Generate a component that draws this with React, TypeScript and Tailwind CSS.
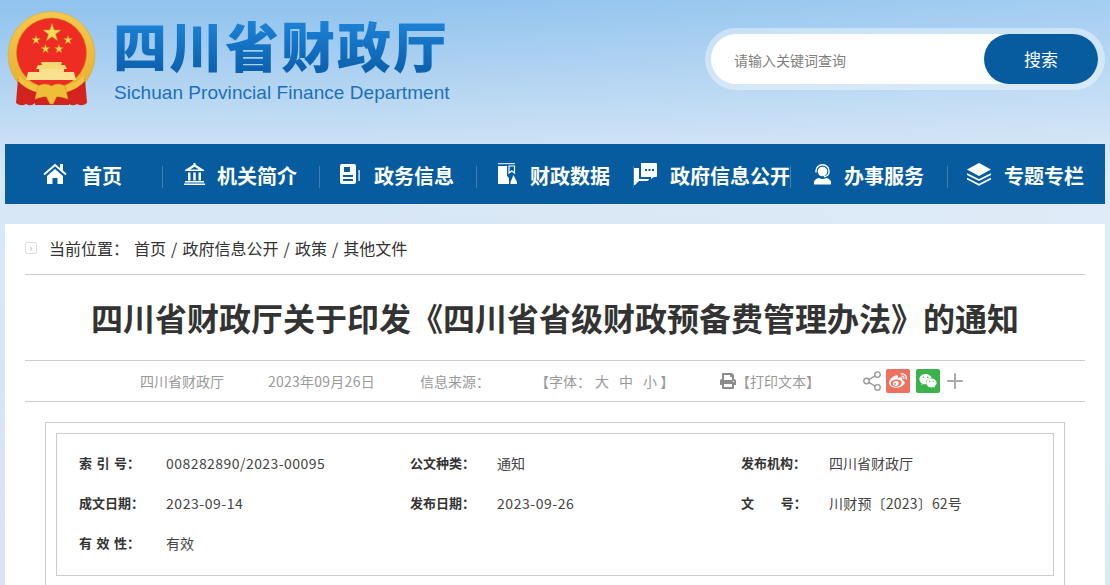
import React from 'react'
import { FaPrint, FaWeibo, FaWeixin } from 'react-icons/fa'
import { Share2, Plus } from 'lucide-react'

const Star = ({ x, y, r }: { x: number; y: number; r: number }) => {
    const pts: string[] = []
    for (let i = 0; i < 10; i++) {
        const rad = i % 2 === 0 ? r : r * 0.4
        const a = (Math.PI / 5) * i - Math.PI / 2
        pts.push(`${x + rad * Math.cos(a)},${y + rad * Math.sin(a)}`)
    }
    return <polygon points={pts.join(' ')} fill="#f8d95a" stroke="#c98d1b" strokeWidth="0.6" />
}

const Emblem = () => (
    <svg width="90" height="96" viewBox="0 0 90 96" className="shrink-0">
        <defs>
            <linearGradient id="gold" x1="0" y1="0" x2="0" y2="1">
                <stop offset="0" stopColor="#f3c94f" />
                <stop offset="1" stopColor="#e8ad2a" />
            </linearGradient>
        </defs>
        <circle cx="44.5" cy="44" r="43.5" fill="url(#gold)" stroke="#d8a02a" strokeWidth="0.5" />
        <circle cx="44.5" cy="42" r="35" fill="#ee2c24" stroke="#c9871d" strokeWidth="0.7" />
        <Star x={45} y={22} r={9.5} />
        <Star x={29} y={29} r={4.5} />
        <Star x={61} y={29} r={4.5} />
        <Star x={38.5} y={38} r={4.5} />
        <Star x={52} y={38} r={4.5} />
        <path d="M34 51 H55 L54 54 H58 L60 58 H29 L31 54 H35 Z" fill="#f6d873" />
        <path d="M32 58 H57 V61 H67 L69 69 H19 L21 61 H32 Z" fill="#f9e08c" />
        <path d="M11 67 L9 92 Q14 96 19 93 Q24 96 28 92 L33 80 Q20 78 11 67 Z" fill="#d3231f" />
        <path d="M78 67 L80 92 Q75 96 70 93 Q65 96 61 92 L56 80 Q69 78 78 67 Z" fill="#d3231f" />
        <path d="M28 86 H62 V94 H28 Z" fill="#d3231f" />
        <path d="M12 64 Q22 76 44.5 76 Q67 76 77 64 L78 70 Q66 83 44.5 83 Q23 83 11 70 Z" fill="#f1c33f" />
        <path d="M31 75 Q38 71 44.5 75 Q51 71 58 75 L61 88 L50 85 L46 93 H43 L39 85 L28 88 Z" fill="#efbe38" stroke="#cf9423" strokeWidth="0.5" />
    </svg>
)

const IconHome = () => (
    <svg width="24" height="22" viewBox="0 0 24 22" fill="currentColor">
        <path d="M17 1 H20 V8 L17 5.5 Z" />
        <path d="M1 11.5 L12 2 L23 11.5" fill="none" stroke="currentColor" strokeWidth="2" />
        <path d="M12 6 L20 13 V21 H14.5 V15 H9.5 V21 H4 V13 Z" />
    </svg>
)

const IconBank = () => (
    <svg width="21" height="22" viewBox="0 0 21 22" fill="currentColor">
        <rect x="9.5" y="0" width="2" height="2" />
        <path d="M10.5 1 L20 7 V8 H1 V7 Z M10.5 3.8 L6 6.5 H15 Z" fillRule="evenodd" />
        <rect x="4" y="9.5" width="2.5" height="8" />
        <rect x="9.25" y="9.5" width="2.5" height="8" />
        <rect x="14.5" y="9.5" width="2.5" height="8" />
        <rect x="1" y="18" width="19" height="1.5" />
        <rect x="0" y="20.5" width="21" height="1.5" />
    </svg>
)

const IconCard = () => (
    <svg width="20" height="20" viewBox="0 0 20 20" fill="currentColor">
        <path d="M0 2 a2 2 0 0 1 2-2 h12 a2 2 0 0 1 2 2 v16 a2 2 0 0 1-2 2 H2 a2 2 0 0 1-2-2 Z M4 3 v5 h6 V3 Z M3 11 v2 h10 v-2 Z M3 15 v2 h10 v-2 Z" fillRule="evenodd" />
        <rect x="18.5" y="6" width="1.2" height="11" />
    </svg>
)

const IconData = () => (
    <svg width="19" height="22" viewBox="0 0 19 22" fill="currentColor">
        <rect x="0" y="0" width="17" height="1.2" opacity="0.8" />
        <path d="M0 3 H9 V13 L11 15 V21 H0 Z" />
        <path d="M11 3 H16.5 V10 L13.8 8 L11 10 Z" fill="none" stroke="currentColor" strokeWidth="1.2" />
        <path d="M15.5 12 L19 19 V21 H12.5 V19 Z" />
    </svg>
)

const IconChat = () => (
    <svg width="23" height="22" viewBox="0 0 23 22" fill="currentColor">
        <path d="M7 0 H22 a1 1 0 0 1 1 1 V13 a1 1 0 0 1-1 1 H20 L17 16 V14 H7 Z M11 6 v2 h2 V6 Z M14.5 6 v2 h2 V6 Z M18 6 v2 h2 V6 Z" fillRule="evenodd" />
        <path d="M0 5 H5 V16 H15 L14 18 H5 L1 22 H0 Z" />
    </svg>
)

const IconService = () => (
    <svg width="19" height="21" viewBox="0 0 19 21" fill="currentColor">
        <circle cx="9.5" cy="7.5" r="4.8" />
        <path d="M3 8.5 V7 A6.5 6.2 0 0 1 16 7 V8.5 Q15.5 12 11 12.8" fill="none" stroke="currentColor" strokeWidth="1.4" />
        <path d="M1 20.5 Q0 15 6 14 Q9.5 16 13 14 Q19 15 18 20.5 Z" />
    </svg>
)

const IconLayers = () => (
    <svg width="24" height="23" viewBox="0 0 24 23" fill="currentColor">
        <path d="M12 0 L24 6.5 L12 13 L0 6.5 Z" />
        <path d="M0 11 L12 17 L24 11" fill="none" stroke="currentColor" strokeWidth="1.6" />
        <path d="M0 15.5 L12 21.8 L24 15.5" fill="none" stroke="currentColor" strokeWidth="1.6" />
    </svg>
)

const NavItem = ({ icon, label, last, className }: { icon: React.ReactNode; label: string; last?: boolean; className: string }) => (
    <div className={`relative flex h-full w-[157px] items-center ${className}`}>
        <span className="flex w-[24px] justify-center text-white">{icon}</span>
        <span className="whitespace-nowrap pt-[4px] text-[20px] font-bold leading-none text-white">{label}</span>
        {!last && <span className="absolute right-[-1px] top-[22px] h-[22px] w-px bg-[#3f80b4]" />}
    </div>
)

const Field = ({ label, value, className }: { label: string; value: string; className?: string }) => (
    <div className="flex h-[40px] items-center">
        <span className="w-[87px] shrink-0 whitespace-pre text-[13px] font-bold text-[#333] [word-spacing:1.5px]">{label}</span>
        <span className={`text-[14px] text-[#444] ${className ?? ''}`}>{value}</span>
    </div>
)

export default function App() {
    return (
        <div className="h-[585px] w-[1110px] overflow-hidden bg-[linear-gradient(90deg,rgba(255,255,255,0)_30%,rgba(255,255,255,0.18)_100%),linear-gradient(180deg,#8fc2ee,#d8e7f6_30%,#d6e4f3)] font-['Noto_Sans_CJK_SC',sans-serif]">
            <header className="flex h-[144px] justify-between pl-[7px] pr-[5px] pt-[11px]">
                <div className="flex">
                    <Emblem />
                    <div className="ml-[16px] flex flex-col">
                        <div className="bg-gradient-to-b from-[#1f8ae0] to-[#0a5ba6] bg-clip-text text-[54px] font-black leading-[68px] tracking-[2px] text-transparent">
                            四川省财政厅
                        </div>
                        <div className="mt-[2px] whitespace-nowrap pl-px font-['Liberation_Sans',sans-serif] text-[19px] leading-[24px] tracking-[0.05px] text-[#1c70ba]">
                            Sichuan Provincial Finance Department
                        </div>
                    </div>
                </div>
                <div className="mt-[17px] flex h-[62px] w-[400px] rounded-full bg-white/40 p-[6px] pr-[7px]">
                    <div className="flex flex-1 items-center rounded-full bg-white">
                        <span className="ml-[23px] flex-1 pt-[3px] text-[14px] text-[#808080]">请输入关键词查询</span>
                        <button className="h-[50px] w-[114px] rounded-full bg-[#075ca0] text-[17px] text-white">搜索</button>
                    </div>
                </div>
            </header>

            <nav className="mx-[5px] flex h-[60px] w-[1100px] items-center bg-[#075ca0]">
                <NavItem className="gap-[15px] pl-[38px]" icon={<IconHome />} label="首页" />
                <NavItem className="gap-[11px] pl-[20px]" icon={<IconBank />} label="机关简介" />
                <NavItem className="gap-[12px] pl-[19px]" icon={<IconCard />} label="政务信息" />
                <NavItem className="gap-[11px] pl-[19px]" icon={<IconData />} label="财政数据" />
                <NavItem className="gap-[13px] pl-0" icon={<IconChat />} label="政府信息公开" />
                <NavItem className="gap-[10px] pl-[20px]" icon={<IconService />} label="办事服务" />
                <NavItem className="gap-[13px] pl-[20px]" last icon={<IconLayers />} label="专题专栏" />
            </nav>

            <main className="mx-[5px] mt-[20px] h-[361px] w-[1100px] bg-white px-[20px]">
                <div className="flex h-[51px] items-center border-b border-[#ccc] pb-[3px] text-[16px] text-[#333]">
                    <span className="mr-[12px] flex h-[12px] w-[12px] items-center justify-center rounded-[2px] border border-[#ddd] text-[11px] leading-none text-[#bbb]">›</span>
                    <span>当前位置：</span>
                    <span className="ml-[5px] [word-spacing:1.5px]">首页 / 政府信息公开 / 政策 / 其他文件</span>
                </div>
                <h1 className="flex h-[86px] items-center justify-center border-b border-[#ccc] pb-[2px] text-[32px] font-bold leading-none text-[#333]">
                    四川省财政厅关于印发《四川省省级财政预备费管理办法》的通知
                </h1>
                <div className="flex h-[41px] items-center border-b border-[#ccc] pl-[115px] text-[14px] text-[#999]">
                    <span className="w-[128px]">四川省财政厅</span>
                    <span className="w-[152px] tracking-[0.25px]">2023年09月26日</span>
                    <span className="w-[115px]">信息来源：</span>
                    <span className="flex w-[185px]">
                        <span className="w-[60px]">【字体：</span>
                        <span className="w-[24px]">大</span>
                        <span className="w-[24px]">中</span>
                        <span>小 】</span>
                    </span>
                    <FaPrint size={16} color="#8c8c8c" />
                    <span className="w-[127px]">【打印文本】</span>
                    <Share2 size={22} color="#999" strokeWidth={1.5} className="ml-[-2px]" />
                    <span className="ml-[3px] flex h-[24px] w-[24px] items-center justify-center rounded-[2px] bg-[#f0705f]">
                        <FaWeibo size={18} color="white" />
                    </span>
                    <span className="ml-[6px] flex h-[24px] w-[24px] items-center justify-center rounded-[2px] bg-[#3cb34a]">
                        <FaWeixin size={18} color="white" />
                    </span>
                    <Plus size={24} color="#aaa" strokeWidth={2} className="ml-[3px]" />
                </div>
                <div className="mx-[20px] mt-[20px] h-[200px] border border-[#ccc] p-[10px]">
                    <div className="grid h-[143px] grid-cols-[331px_331px_1fr] content-start border border-[#ccc] px-[22px] py-[9px]">
                        <Field label="索 引 号：" value="008282890/2023-00095" className="tracking-[0.45px]" />
                        <Field label="公文种类：" value="通知" />
                        <Field label="发布机构：" value="四川省财政厅" className="ml-px" />
                        <Field label="成文日期：" value="2023-09-14" className="tracking-[0.55px]" />
                        <Field label="发布日期：" value="2023-09-26" className="tracking-[0.55px]" />
                        <Field label={'文      号：'} value="川财预〔2023〕62号" className="ml-px tracking-[0.2px]" />
                        <Field label="有 效 性：" value="有效" />
                    </div>
                </div>
            </main>
        </div>
    )
}
